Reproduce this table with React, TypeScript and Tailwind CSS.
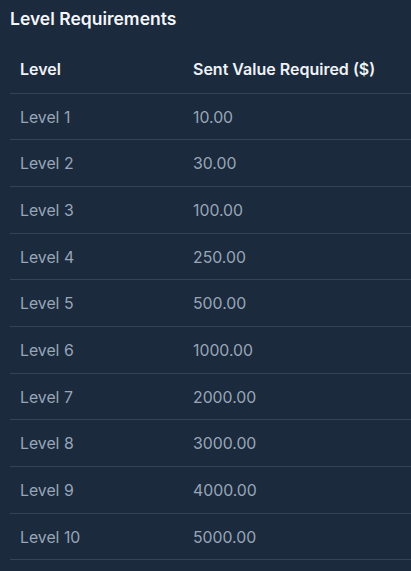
import React from "react";

const levels = [
  { level: "Level 1", value: "10.00" },
  { level: "Level 2", value: "30.00" },
  { level: "Level 3", value: "100.00" },
  { level: "Level 4", value: "250.00" },
  { level: "Level 5", value: "500.00" },
  { level: "Level 6", value: "1000.00" },
  { level: "Level 7", value: "2000.00" },
  { level: "Level 8", value: "3000.00" },
  { level: "Level 9", value: "4000.00" },
  { level: "Level 10", value: "5000.00" },
];

const App = () => {
  return (
    <div
      className="min-h-[571px] bg-[#1b2a3c] pl-[10px] pt-[8px]"
      style={{ fontFamily: "Inter, 'Noto Sans', sans-serif" }}
    >
      <h2 className="text-[17.5px] leading-[22px] font-semibold text-[#f3f6fa]">
        Level Requirements
      </h2>
      <table className="w-full mt-[16px] border-collapse">
        <thead>
          <tr className="border-b border-[#33435a]">
            <th className="h-[47px] pl-[10px] w-[183px] text-left text-[16px] font-semibold text-[#eef2f7]">
              Level
            </th>
            <th className="h-[47px] text-left text-[16px] font-semibold text-[#eef2f7]">
              Sent Value Required ($)
            </th>
          </tr>
        </thead>
        <tbody>
          {levels.map((row) => (
            <tr key={row.level} className="border-b border-[#33435a]">
              <td className="h-[46.7px] pl-[10px] pt-[2px] text-[15.8px] text-[#98a6b8]">
                {row.level}
              </td>
              <td className="h-[46.7px] pt-[2px] text-[15.8px] text-[#98a6b8]">
                {row.value}
              </td>
            </tr>
          ))}
        </tbody>
      </table>
    </div>
  );
};

export default App;
